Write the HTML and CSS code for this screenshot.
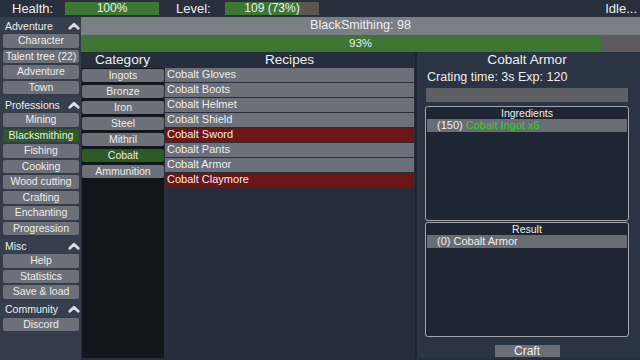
FILE: index.html
```html
<!DOCTYPE html>
<html lang="en">
<head>
    <meta charset="utf-8" />
    <title>Idle Crafting</title>
    <link rel="stylesheet" href="styles.css">
</head>
<body>
    <header class="topbar">
        <span class="stat-label">Health:</span>
        <div class="stat-bar">
            <div class="stat-fill" style="width: 100%"></div>
            <span class="stat-text">100%</span>
        </div>
        <span class="stat-label level-label">Level:</span>
        <div class="stat-bar level-bar">
            <div class="stat-fill" style="width: 80%"></div>
            <span class="stat-text">109 (73%)</span>
        </div>
        <span class="status">Idle...</span>
    </header>

    <div class="app">
        <nav class="sidebar">
            <div class="nav-head first">Adventure
                <svg class="chevron" viewBox="0 0 12 8"><polyline points="1.8,6.3 6,2.2 10.2,6.3" /></svg>
            </div>
            <div class="nav-btn">Character</div>
            <div class="nav-btn">Talent tree (22)</div>
            <div class="nav-btn">Adventure</div>
            <div class="nav-btn">Town</div>

            <div class="nav-head">Professions
                <svg class="chevron" viewBox="0 0 12 8"><polyline points="1.8,6.3 6,2.2 10.2,6.3" /></svg>
            </div>
            <div class="nav-btn">Mining</div>
            <div class="nav-btn active">Blacksmithing</div>
            <div class="nav-btn">Fishing</div>
            <div class="nav-btn">Cooking</div>
            <div class="nav-btn">Wood cutting</div>
            <div class="nav-btn">Crafting</div>
            <div class="nav-btn">Enchanting</div>
            <div class="nav-btn">Progression</div>

            <div class="nav-head">Misc
                <svg class="chevron" viewBox="0 0 12 8"><polyline points="1.8,6.3 6,2.2 10.2,6.3" /></svg>
            </div>
            <div class="nav-btn">Help</div>
            <div class="nav-btn">Statistics</div>
            <div class="nav-btn">Save &amp; load</div>

            <div class="nav-head">Community
                <svg class="chevron" viewBox="0 0 12 8"><polyline points="1.8,6.3 6,2.2 10.2,6.3" /></svg>
            </div>
            <div class="nav-btn">Discord</div>
        </nav>

        <main class="main">
            <div class="skill-title">BlackSmithing: 98</div>
            <div class="skill-progress">
                <div class="skill-fill" style="width: 93%"></div>
                <span class="skill-text">93%</span>
            </div>

            <div class="columns">
                <section class="category">
                    <h2 class="col-title">Category</h2>
                    <div class="category-list">
                        <div class="cat-btn">Ingots</div>
                        <div class="cat-btn">Bronze</div>
                        <div class="cat-btn">Iron</div>
                        <div class="cat-btn">Steel</div>
                        <div class="cat-btn">Mithril</div>
                        <div class="cat-btn active">Cobalt</div>
                        <div class="cat-btn">Ammunition</div>
                    </div>
                </section>

                <section class="recipes">
                    <h2 class="col-title">Recipes</h2>
                    <div class="recipe">Cobalt Gloves</div>
                    <div class="recipe">Cobalt Boots</div>
                    <div class="recipe">Cobalt Helmet</div>
                    <div class="recipe">Cobalt Shield</div>
                    <div class="recipe locked">Cobalt Sword</div>
                    <div class="recipe">Cobalt Pants</div>
                    <div class="recipe">Cobalt Armor</div>
                    <div class="recipe locked">Cobalt Claymore</div>
                </section>

                <section class="detail">
                    <h2 class="col-title">Cobalt Armor</h2>
                    <div class="craft-info">Crating time: 3s Exp: 120</div>
                    <div class="craft-bar"></div>
                    <div class="box">
                        <div class="box-title">Ingredients</div>
                        <div class="box-row">(150) <span class="have">Cobalt Ingot x6</span></div>
                    </div>
                    <div class="box">
                        <div class="box-title">Result</div>
                        <div class="box-row">(0) Cobalt Armor</div>
                    </div>
                    <div class="craft-btn">Craft</div>
                </section>
            </div>
        </main>
    </div>
</body>
</html>
```

FILE: styles.css
```css
* {
    box-sizing: border-box;
}

body {
    margin: 0;
    width: 640px;
    height: 360px;
    overflow: hidden;
    background-color: #29313f;
    color: #eeeeee;
    font-family: "Liberation Sans", Arial, sans-serif;
    display: flex;
    flex-direction: column;
    white-space: nowrap;
}

/* top status bar */
.topbar {
    height: 17px;
    display: flex;
    align-items: center;
    padding-left: 12px;
    background-color: #28303e;
    flex-shrink: 0;
}

.stat-label {
    width: 53px;
    font-size: 13px;
}

.level-label {
    margin-left: 17px;
    width: 49px;
}

.stat-bar {
    position: relative;
    width: 94px;
    height: 13px;
    background-color: #5a5751;
}

.stat-fill {
    height: 100%;
    background-color: #3d7833;
}

.stat-text {
    position: absolute;
    left: 0;
    right: 0;
    top: 0;
    text-align: center;
    font-size: 12px;
    line-height: 13px;
}

.status {
    margin-left: auto;
    padding-right: 3px;
    font-size: 13px;
}

.app {
    flex: 1;
    display: flex;
}

/* sidebar */
.sidebar {
    width: 81px;
    padding: 0 2px 0 3px;
    background-color: #343c4a;
    flex-shrink: 0;
}

.nav-head {
    display: flex;
    align-items: center;
    justify-content: space-between;
    height: 15px;
    margin: 3px -2px 1px -3px;
    padding: 0 1px 0 5px;
    font-size: 10.5px;
    background-color: #363f4d;
}

.nav-head.first {
    margin-top: 1px;
}

.chevron {
    width: 12px;
    height: 8px;
    fill: none;
    stroke: #dddddd;
    stroke-width: 2.8;
    stroke-linecap: round;
    stroke-linejoin: round;
}

.nav-btn {
    height: 13.5px;
    margin-bottom: 2px;
    border-radius: 2px;
    background-color: #6b7079;
    text-align: center;
    font-size: 10.5px;
    line-height: 13.5px;
}

.nav-btn.active {
    background-color: #2d5a25;
}

/* main area */
.main {
    flex: 1;
    display: flex;
    flex-direction: column;
}

.skill-title {
    height: 18px;
    background-color: #7a7e85;
    text-align: center;
    font-size: 12.6px;
    line-height: 17px;
}

.skill-progress {
    position: relative;
    height: 17px;
    background-color: #5c5a5e;
}

.skill-fill {
    height: 100%;
    background-color: #3e7434;
}

.skill-text {
    position: absolute;
    left: 0;
    right: 0;
    top: 0;
    text-align: center;
    font-size: 11.5px;
    line-height: 17px;
}

.columns {
    flex: 1;
    display: grid;
    grid-template-columns: 83px 253px 1fr;
    padding-bottom: 2px;
    background-color: #262e3c;
}

.col-title {
    margin: 0;
    height: 16px;
    font-size: 13.6px;
    font-weight: normal;
    line-height: 16px;
    text-align: center;
}

.category {
    display: flex;
    flex-direction: column;
}

.category-list {
    flex: 1;
    margin: 0 0 0 1px;
    padding-top: 1px;
    background-color: #101619;
}

.cat-btn {
    height: 13px;
    margin-bottom: 3px;
    border-radius: 2px;
    background-color: #6b7079;
    text-align: center;
    font-size: 10.5px;
    line-height: 13px;
}

.cat-btn.active {
    background-color: #2d5a25;
}

.recipes {
    padding: 0 1px 0 1px;
    border-right: 2px solid #1e2430;
}

.recipe {
    height: 13.5px;
    margin-bottom: 1.5px;
    padding-left: 2px;
    background-color: #6b7079;
    font-size: 11px;
    line-height: 13.5px;
}

.recipe.locked {
    background-color: #6d1616;
}

.detail {
    padding: 0 11px 0 8px;
    background-color: #2b3443;
    display: flex;
    flex-direction: column;
}

.craft-info {
    margin-top: 2px;
    padding-left: 2px;
    height: 15px;
    font-size: 12.5px;
    line-height: 15px;
}

.craft-bar {
    margin: 3px 1px 0 1px;
    height: 14px;
    background-color: #5c6065;
}

.box {
    margin-top: 4px;
    height: 115px;
    border: 1px solid #a2a6ac;
    border-radius: 3px;
    background-color: #1e2533;
    padding: 0 1px;
}

.box + .box {
    margin-top: 1px;
}

.box-title {
    height: 12px;
    font-size: 10.5px;
    line-height: 12px;
    text-align: center;
}

.box-row {
    height: 13px;
    padding-left: 10px;
    background-color: #686d74;
    font-size: 11px;
    line-height: 13px;
}

.have {
    color: #2fd02f;
}

.craft-btn {
    align-self: center;
    margin-top: 8px;
    width: 65px;
    height: 12px;
    background-color: #6a6f77;
    text-align: center;
    font-size: 12px;
    line-height: 12px;
}
```
